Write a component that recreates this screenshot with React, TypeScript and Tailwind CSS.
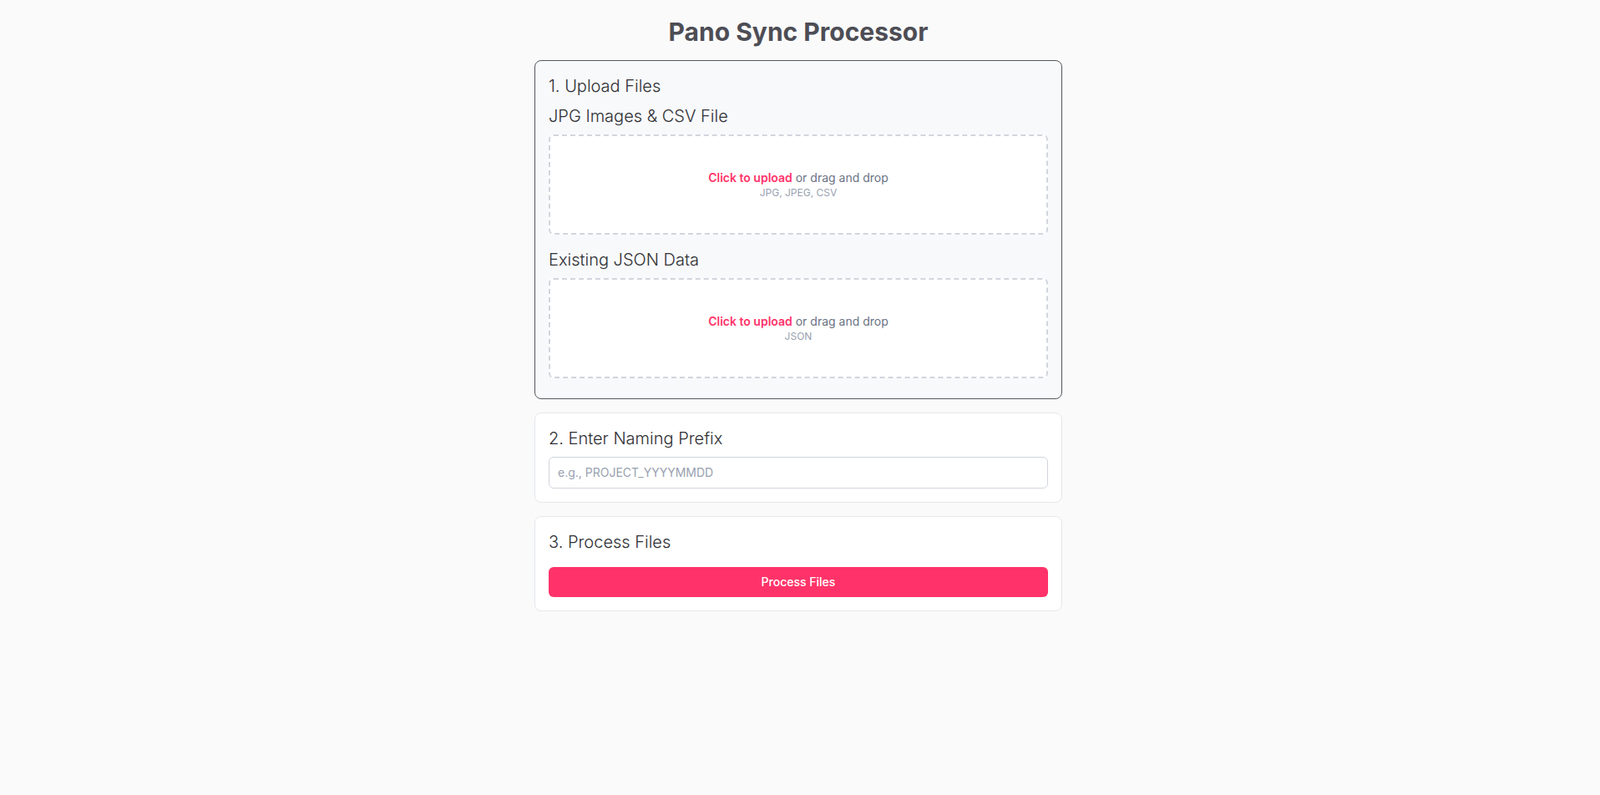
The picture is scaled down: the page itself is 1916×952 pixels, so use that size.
import React from "react";

function DropZone({ types }: { types: string }) {
  return (
    <div className="flex flex-col items-center justify-center rounded-md border-2 border-dashed border-gray-300 bg-white py-10 text-center">
      <p className="text-sm leading-5 text-gray-500">
        <span className="font-semibold text-[#ff3369]">Click to upload</span> or drag and drop
      </p>
      <p className="text-xs leading-4 text-gray-400">{types}</p>
    </div>
  );
}

export default function App() {
  return (
    <div className="min-h-screen bg-[#fafafa] pr-1 font-['Inter',sans-serif]">
      <main className="mx-auto max-w-2xl p-5">
        <h1 className="mb-4 text-center text-3xl font-bold text-[#4d4d55]">Pano Sync Processor</h1>

        <section className="rounded-lg border border-[#55565c] bg-[#f8f9fb] px-4 pt-4 pb-6">
          <h2 className="mb-2 text-xl leading-7 font-light text-[#2f3034]">1. Upload Files</h2>
          <h3 className="mb-2 text-xl leading-7 font-light text-[#2f3034]">JPG Images &amp; CSV File</h3>
          <DropZone types="JPG, JPEG, CSV" />
          <h3 className="mt-4 mb-2 text-xl leading-7 font-light text-[#2f3034]">Existing JSON Data</h3>
          <DropZone types="JSON" />
        </section>

        <section className="mt-4 rounded-lg border border-gray-200 bg-white p-4">
          <h2 className="mb-2 text-xl leading-7 font-light text-[#2f3034]">2. Enter Naming Prefix</h2>
          <input
            type="text"
            placeholder="e.g., PROJECT_YYYYMMDD"
            className="block w-full rounded-md border border-gray-300 bg-white px-2.5 py-2 text-sm leading-5 text-gray-700 placeholder:text-gray-400 focus:outline-none"
          />
        </section>

        <section className="mt-4 rounded-lg border border-gray-200 bg-white p-4">
          <h2 className="mb-4 text-xl leading-7 font-light text-[#2f3034]">3. Process Files</h2>
          <button className="block w-full rounded-md bg-[#ff3369] py-2 text-sm leading-5 font-medium text-white">
            Process Files
          </button>
        </section>
      </main>
    </div>
  );
}
